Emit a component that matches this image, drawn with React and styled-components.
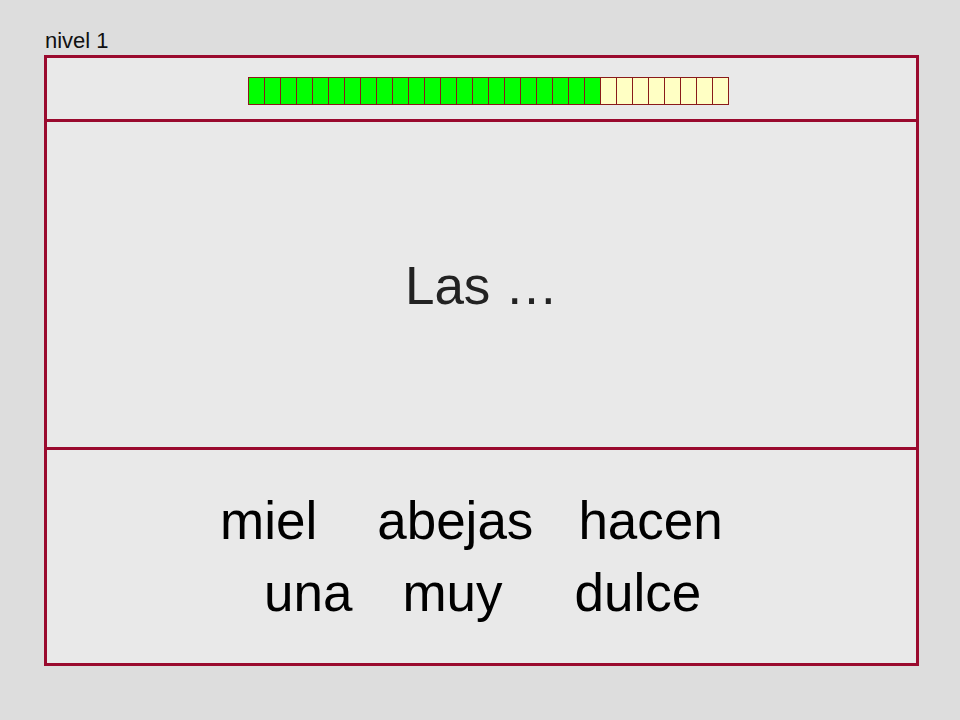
import React from "react";
import styled, { createGlobalStyle } from "styled-components";

const GlobalStyle = createGlobalStyle`
  body {
    margin: 0;
    background: #dddddd;
    font-family: "Liberation Sans", Arial, sans-serif;
  }
`;

const TOTAL = 30;
const DONE = 22;

// word layout as in the game: each row has its own indent and uneven gaps
const rows = [
  {
    indent: 173,
    words: [
      { text: "miel", gap: 0 },
      { text: "abejas", gap: 60 },
      { text: "hacen", gap: 45 },
    ],
  },
  {
    indent: 217,
    words: [
      { text: "una", gap: 0 },
      { text: "muy", gap: 50 },
      { text: "dulce", gap: 72 },
    ],
  },
];

export default function App() {
  return (
    <>
      <GlobalStyle />
      <Page>
        <Level>nivel 1</Level>
        <Board>
          <ProgressSection>
            <Progress>
              {Array.from({ length: TOTAL }, (_, i) => (
                <Cell key={i} $done={i < DONE} />
              ))}
            </Progress>
          </ProgressSection>

          <SentenceSection>
            <Sentence>Las …</Sentence>
          </SentenceSection>

          <WordsSection>
            {rows.map((row, r) => (
              <WordRow key={r} $indent={row.indent}>
                {row.words.map((w) => (
                  <Word key={w.text} $gap={w.gap}>
                    {w.text}
                  </Word>
                ))}
              </WordRow>
            ))}
          </WordsSection>
        </Board>
      </Page>
    </>
  );
}

const Page = styled.div`
  padding: 26px 0 0 44px;
`;

const Level = styled.div`
  font-size: 22px;
  line-height: 29px;
  color: #111;
  padding-left: 1px;
`;

const Board = styled.div`
  width: 875px;
  box-sizing: border-box;
  border: 3px solid #9a0a2e;
  background: #e9e9e9;
  display: flex;
  flex-direction: column;
`;

const ProgressSection = styled.div`
  height: 64px;
  box-sizing: border-box;
  border-bottom: 3px solid #9a0a2e;
  padding-left: 201px;
  padding-top: 19px;
`;

const Progress = styled.div`
  display: flex;
`;

const Cell = styled.div`
  width: 17px;
  height: 28px;
  box-sizing: border-box;
  border: 1px solid #8a1a1a;
  background: ${(p) => (p.$done ? "#00ff00" : "#ffffc4")};
  & + & {
    margin-left: -1px;
  }
`;

const SentenceSection = styled.div`
  height: 328px;
  box-sizing: border-box;
  border-bottom: 3px solid #9a0a2e;
  display: flex;
  align-items: center;
  justify-content: center;
`;

const Sentence = styled.div`
  font-size: 53px;
  color: #222;
  padding-top: 1px;
`;

const WordsSection = styled.div`
  height: 213px;
  padding-top: 35px;
  box-sizing: border-box;
`;

const WordRow = styled.div`
  display: flex;
  padding-left: ${(p) => p.$indent}px;
`;

const Word = styled.span`
  font-size: 53px;
  line-height: 72px;
  color: #000;
  margin-left: ${(p) => p.$gap}px;
`;
